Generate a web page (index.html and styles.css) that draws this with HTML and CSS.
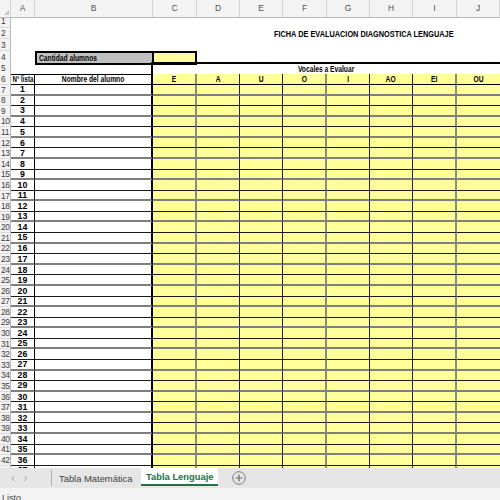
FILE: index.html
```html
<!DOCTYPE html>
<html>
<head>
<meta charset="utf-8">
<link rel="stylesheet" href="styles.css">
</head>
<body>
<div class="sheet">
  <div class="row hdr">
    <div class="corner"><span class="tri"></span></div>
    <div class="ch">A</div><div class="ch">B</div><div class="ch">C</div><div class="ch">D</div><div class="ch">E</div>
    <div class="ch">F</div><div class="ch">G</div><div class="ch">H</div><div class="ch">I</div><div class="ch">J</div>
  </div>
  <div class="row top"><div class="rh">1</div></div>
  <div class="row top"><div class="rh">2</div><div class="title"><span class="nl">FICHA DE EVALUACION DIAGNOSTICA LENGUAJE</span></div></div>
  <div class="row top"><div class="rh">3</div></div>
  <div class="row mid"><div class="rh">4</div><div></div><div class="cant"><span class="nl">Cantidad alumnos</span></div><div class="cantv"></div></div>
  <div class="row mid"><div class="rh">5</div><div></div><div class="b5"></div><div class="voc"><span class="n">Vocales a Evaluar</span></div></div>
  <div class="row mid head"><div class="rh">6</div><div class="na"><span class="n">N° lista</span></div><div class="nm"><span class="n">Nombre del alumno</span></div>
    <div class="v"><span class="n">E</span></div><div class="v"><span class="n">A</span></div><div class="v"><span class="n">U</span></div><div class="v"><span class="n">O</span></div><div class="v"><span class="n">I</span></div><div class="v"><span class="n">AO</span></div><div class="v"><span class="n">EI</span></div><div class="v"><span class="n">OU</span></div></div>
  <div class="row dat"><div class="rh">7</div><div class="na">1</div><div class="nm"></div><div class="v"></div><div class="v"></div><div class="v"></div><div class="v"></div><div class="v"></div><div class="v"></div><div class="v"></div><div class="v"></div></div>
  <div class="row dat"><div class="rh">8</div><div class="na">2</div><div class="nm"></div><div class="v"></div><div class="v"></div><div class="v"></div><div class="v"></div><div class="v"></div><div class="v"></div><div class="v"></div><div class="v"></div></div>
  <div class="row dat"><div class="rh">9</div><div class="na">3</div><div class="nm"></div><div class="v"></div><div class="v"></div><div class="v"></div><div class="v"></div><div class="v"></div><div class="v"></div><div class="v"></div><div class="v"></div></div>
  <div class="row dat"><div class="rh">10</div><div class="na">4</div><div class="nm"></div><div class="v"></div><div class="v"></div><div class="v"></div><div class="v"></div><div class="v"></div><div class="v"></div><div class="v"></div><div class="v"></div></div>
  <div class="row dat"><div class="rh">11</div><div class="na">5</div><div class="nm"></div><div class="v"></div><div class="v"></div><div class="v"></div><div class="v"></div><div class="v"></div><div class="v"></div><div class="v"></div><div class="v"></div></div>
  <div class="row dat"><div class="rh">12</div><div class="na">6</div><div class="nm"></div><div class="v"></div><div class="v"></div><div class="v"></div><div class="v"></div><div class="v"></div><div class="v"></div><div class="v"></div><div class="v"></div></div>
  <div class="row dat"><div class="rh">13</div><div class="na">7</div><div class="nm"></div><div class="v"></div><div class="v"></div><div class="v"></div><div class="v"></div><div class="v"></div><div class="v"></div><div class="v"></div><div class="v"></div></div>
  <div class="row dat"><div class="rh">14</div><div class="na">8</div><div class="nm"></div><div class="v"></div><div class="v"></div><div class="v"></div><div class="v"></div><div class="v"></div><div class="v"></div><div class="v"></div><div class="v"></div></div>
  <div class="row dat"><div class="rh">15</div><div class="na">9</div><div class="nm"></div><div class="v"></div><div class="v"></div><div class="v"></div><div class="v"></div><div class="v"></div><div class="v"></div><div class="v"></div><div class="v"></div></div>
  <div class="row dat"><div class="rh">16</div><div class="na">10</div><div class="nm"></div><div class="v"></div><div class="v"></div><div class="v"></div><div class="v"></div><div class="v"></div><div class="v"></div><div class="v"></div><div class="v"></div></div>
  <div class="row dat"><div class="rh">17</div><div class="na">11</div><div class="nm"></div><div class="v"></div><div class="v"></div><div class="v"></div><div class="v"></div><div class="v"></div><div class="v"></div><div class="v"></div><div class="v"></div></div>
  <div class="row dat"><div class="rh">18</div><div class="na">12</div><div class="nm"></div><div class="v"></div><div class="v"></div><div class="v"></div><div class="v"></div><div class="v"></div><div class="v"></div><div class="v"></div><div class="v"></div></div>
  <div class="row dat"><div class="rh">19</div><div class="na">13</div><div class="nm"></div><div class="v"></div><div class="v"></div><div class="v"></div><div class="v"></div><div class="v"></div><div class="v"></div><div class="v"></div><div class="v"></div></div>
  <div class="row dat"><div class="rh">20</div><div class="na">14</div><div class="nm"></div><div class="v"></div><div class="v"></div><div class="v"></div><div class="v"></div><div class="v"></div><div class="v"></div><div class="v"></div><div class="v"></div></div>
  <div class="row dat"><div class="rh">21</div><div class="na">15</div><div class="nm"></div><div class="v"></div><div class="v"></div><div class="v"></div><div class="v"></div><div class="v"></div><div class="v"></div><div class="v"></div><div class="v"></div></div>
  <div class="row dat"><div class="rh">22</div><div class="na">16</div><div class="nm"></div><div class="v"></div><div class="v"></div><div class="v"></div><div class="v"></div><div class="v"></div><div class="v"></div><div class="v"></div><div class="v"></div></div>
  <div class="row dat"><div class="rh">23</div><div class="na">17</div><div class="nm"></div><div class="v"></div><div class="v"></div><div class="v"></div><div class="v"></div><div class="v"></div><div class="v"></div><div class="v"></div><div class="v"></div></div>
  <div class="row dat"><div class="rh">24</div><div class="na">18</div><div class="nm"></div><div class="v"></div><div class="v"></div><div class="v"></div><div class="v"></div><div class="v"></div><div class="v"></div><div class="v"></div><div class="v"></div></div>
  <div class="row dat"><div class="rh">25</div><div class="na">19</div><div class="nm"></div><div class="v"></div><div class="v"></div><div class="v"></div><div class="v"></div><div class="v"></div><div class="v"></div><div class="v"></div><div class="v"></div></div>
  <div class="row dat"><div class="rh">26</div><div class="na">20</div><div class="nm"></div><div class="v"></div><div class="v"></div><div class="v"></div><div class="v"></div><div class="v"></div><div class="v"></div><div class="v"></div><div class="v"></div></div>
  <div class="row dat"><div class="rh">27</div><div class="na">21</div><div class="nm"></div><div class="v"></div><div class="v"></div><div class="v"></div><div class="v"></div><div class="v"></div><div class="v"></div><div class="v"></div><div class="v"></div></div>
  <div class="row dat"><div class="rh">28</div><div class="na">22</div><div class="nm"></div><div class="v"></div><div class="v"></div><div class="v"></div><div class="v"></div><div class="v"></div><div class="v"></div><div class="v"></div><div class="v"></div></div>
  <div class="row dat"><div class="rh">29</div><div class="na">23</div><div class="nm"></div><div class="v"></div><div class="v"></div><div class="v"></div><div class="v"></div><div class="v"></div><div class="v"></div><div class="v"></div><div class="v"></div></div>
  <div class="row dat"><div class="rh">30</div><div class="na">24</div><div class="nm"></div><div class="v"></div><div class="v"></div><div class="v"></div><div class="v"></div><div class="v"></div><div class="v"></div><div class="v"></div><div class="v"></div></div>
  <div class="row dat"><div class="rh">31</div><div class="na">25</div><div class="nm"></div><div class="v"></div><div class="v"></div><div class="v"></div><div class="v"></div><div class="v"></div><div class="v"></div><div class="v"></div><div class="v"></div></div>
  <div class="row dat"><div class="rh">32</div><div class="na">26</div><div class="nm"></div><div class="v"></div><div class="v"></div><div class="v"></div><div class="v"></div><div class="v"></div><div class="v"></div><div class="v"></div><div class="v"></div></div>
  <div class="row dat"><div class="rh">33</div><div class="na">27</div><div class="nm"></div><div class="v"></div><div class="v"></div><div class="v"></div><div class="v"></div><div class="v"></div><div class="v"></div><div class="v"></div><div class="v"></div></div>
  <div class="row dat"><div class="rh">34</div><div class="na">28</div><div class="nm"></div><div class="v"></div><div class="v"></div><div class="v"></div><div class="v"></div><div class="v"></div><div class="v"></div><div class="v"></div><div class="v"></div></div>
  <div class="row dat"><div class="rh">35</div><div class="na">29</div><div class="nm"></div><div class="v"></div><div class="v"></div><div class="v"></div><div class="v"></div><div class="v"></div><div class="v"></div><div class="v"></div><div class="v"></div></div>
  <div class="row dat"><div class="rh">36</div><div class="na">30</div><div class="nm"></div><div class="v"></div><div class="v"></div><div class="v"></div><div class="v"></div><div class="v"></div><div class="v"></div><div class="v"></div><div class="v"></div></div>
  <div class="row dat"><div class="rh">37</div><div class="na">31</div><div class="nm"></div><div class="v"></div><div class="v"></div><div class="v"></div><div class="v"></div><div class="v"></div><div class="v"></div><div class="v"></div><div class="v"></div></div>
  <div class="row dat"><div class="rh">38</div><div class="na">32</div><div class="nm"></div><div class="v"></div><div class="v"></div><div class="v"></div><div class="v"></div><div class="v"></div><div class="v"></div><div class="v"></div><div class="v"></div></div>
  <div class="row dat"><div class="rh">39</div><div class="na">33</div><div class="nm"></div><div class="v"></div><div class="v"></div><div class="v"></div><div class="v"></div><div class="v"></div><div class="v"></div><div class="v"></div><div class="v"></div></div>
  <div class="row dat"><div class="rh">40</div><div class="na">34</div><div class="nm"></div><div class="v"></div><div class="v"></div><div class="v"></div><div class="v"></div><div class="v"></div><div class="v"></div><div class="v"></div><div class="v"></div></div>
  <div class="row dat"><div class="rh">41</div><div class="na">35</div><div class="nm"></div><div class="v"></div><div class="v"></div><div class="v"></div><div class="v"></div><div class="v"></div><div class="v"></div><div class="v"></div><div class="v"></div></div>
  <div class="row dat"><div class="rh">42</div><div class="na">36</div><div class="nm"></div><div class="v"></div><div class="v"></div><div class="v"></div><div class="v"></div><div class="v"></div><div class="v"></div><div class="v"></div><div class="v"></div></div>
  <div class="row dat"><div class="rh">43</div><div class="na">37</div><div class="nm"></div><div class="v"></div><div class="v"></div><div class="v"></div><div class="v"></div><div class="v"></div><div class="v"></div><div class="v"></div><div class="v"></div></div>
</div>
<div class="tabs">
  <div class="nav"><span class="arr">&#x2039;</span><span class="arr">&#x203A;</span></div>
  <div class="tab">Tabla Matemática</div>
  <div class="tab active">Tabla Lenguaje</div>
  <div class="add">
    <svg width="14" height="14" viewBox="0 0 14 14"><circle cx="7" cy="7" r="6.3" fill="none" stroke="#7a7a7a" stroke-width="1"/><path d="M7 3.5v7M3.5 7h7" stroke="#6a6a6a" stroke-width="1.2"/></svg>
  </div>
</div>
<div class="status">Listo</div>
</body>
</html>
```
FILE: styles.css
```css
html, body {
  margin: 0;
  padding: 0;
  background: #ffffff;
}
body {
  width: 500px;
  height: 500px;
  overflow: hidden;
  font-family: "Liberation Sans", Arial, sans-serif;
}
.sheet {
  height: 468px;
  overflow: hidden;
  background: #fff;
}
.row {
  display: grid;
  grid-template-columns: 11px 24px 118px 44px 43px 43px 44px 43px 43px 44px 43px;
}
.row > div {
  box-sizing: border-box;
  min-width: 0;
}
.hdr { height: 16px; }
.top { height: 11.67px; }
.mid { height: 11.33px; }
.dat { height: 10.58px; }

/* narrow text (Arial Narrow look) */
.n, .nl {
  display: inline-block;
  transform: scaleX(0.76);
  white-space: nowrap;
}
.n { transform-origin: center; }
.nl { transform-origin: left center; }

.corner {
  background: #f3f3f3;
  border-right: 1px solid #d0d0d0;
  border-bottom: 1px solid #b8b8b8;
  position: relative;
}
.tri {
  position: absolute;
  right: 1px;
  bottom: 2px;
  width: 0;
  height: 0;
  border-left: 5px solid transparent;
  border-bottom: 5px solid #c4c4c4;
}
.ch {
  background: #f3f3f3;
  border-right: 1px solid #d4d4d4;
  border-bottom: 1px solid #b8b8b8;
  color: #505050;
  font-size: 8.5px;
  text-align: center;
  line-height: 17px;
}
.rh {
  background: #f3f3f3;
  border-right: 1px solid #b8b8b8;
  border-bottom: 1px solid #dadada;
  color: #3a3a3a;
  font-size: 8.4px;
  line-height: 10px;
  padding-left: 1px;
  display: flex;
  align-items: center;
  overflow: hidden;
  white-space: nowrap;
  letter-spacing: -0.4px;
}
.title {
  grid-column: 6 / 12;
  padding-left: 34px;
  font-weight: bold;
  font-size: 9.6px;
  white-space: nowrap;
  color: #000;
  display: flex;
  align-items: center;
}
.title .nl { transform: scaleX(0.765); }
.cant {
  background: #c0c0c0;
  border: 2px solid #000;
  border-right: 1px solid #000;
  font-weight: bold;
  font-size: 8.8px;
  padding-left: 2px;
  white-space: nowrap;
  display: flex;
  align-items: center;
}
.cantv {
  background: #ffff99;
  border: 2px solid #000;
  border-left: 1px solid #000;
}
.b5 {
  border-right: 2px solid #000;
}
.voc {
  grid-column: 4 / 12;
  border-top: 2px solid #000;
  border-bottom: 1px solid #000;
  font-weight: bold;
  font-size: 8.8px;
  display: flex;
  align-items: center;
  justify-content: center;
}
.na, .nm, .v {
  font-weight: bold;
  font-size: 8.8px;
  color: #000;
  white-space: nowrap;
  overflow: hidden;
  display: flex;
  align-items: center;
  justify-content: center;
}
.na {
  border-right: 1px solid #000;
}
.na .n { transform: scaleX(0.7); }
.nm {
  border-right: 2px solid #000;
}
.v {
  background: #ffff99;
  border-right: 1px solid #202020;
}
.v:nth-child(4), .v:nth-child(7), .v:nth-child(10) {
  border-right: 2px solid #8a8a80;
}
.v:nth-child(11) {
  border-right: none;
}
.head > .na, .head > .nm {
  border-top: 1px solid #000;
}
.head > .na, .head > .nm, .head > .v {
  border-bottom: 1px solid #000;
}
.dat:nth-child(odd) > .na, .dat:nth-child(odd) > .nm, .dat:nth-child(odd) > .v {
  border-bottom: 1px solid #1a1a1a;
}
.dat:nth-child(even) > .na, .dat:nth-child(even) > .nm, .dat:nth-child(even) > .v {
  border-bottom: 2px solid #7e7e7e;
}

.tabs {
  height: 20px;
  background: #e6e6e6;
  display: flex;
  align-items: stretch;
}
.nav {
  width: 52px;
  border-right: 1px solid #b0b0b0;
  margin: 2px 0;
  display: flex;
  align-items: center;
  padding-left: 11px;
  gap: 8px;
  box-sizing: border-box;
}
.arr {
  color: #b4b4b4;
  font-size: 13px;
  line-height: 14px;
}
.tab {
  display: flex;
  align-items: center;
  padding: 0 7px;
  font-size: 9.4px;
  color: #444;
  white-space: nowrap;
}
.tabs .tab:nth-child(2) {
  width: 89px;
  box-sizing: border-box;
}
.active {
  background: #fff;
  color: #217346;
  font-weight: bold;
  width: 77px;
  box-sizing: border-box;
  padding: 0 0 0 5px;
  height: 18px;
  border-bottom: 2px solid #217346;
}
.add {
  display: flex;
  align-items: center;
  padding-left: 14px;
}
.status {
  height: 12px;
  background: #f3f3f3;
  font-size: 9px;
  color: #444;
  padding-left: 2px;
  line-height: 20px;
  overflow: hidden;
}
```
